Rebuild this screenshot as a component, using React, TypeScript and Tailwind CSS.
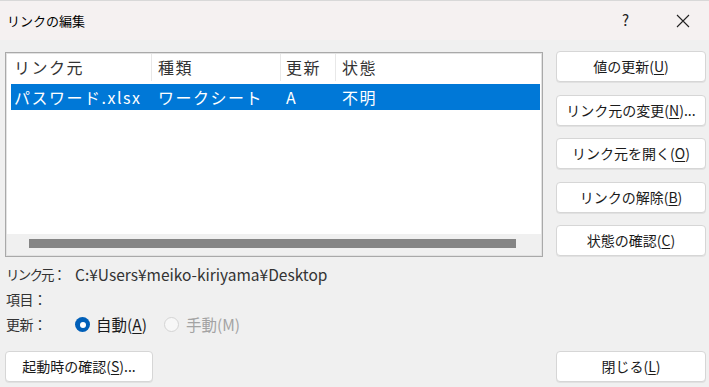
const font = { fontFamily: '"Noto Sans CJK JP", "Noto Sans", sans-serif' };

const U = ({ k }: { k: string }) => <span className="underline underline-offset-2">{k}</span>;

const btn =
  'flex items-center justify-center h-[31px] rounded-[4px] bg-white border border-[#d6d6d6] text-[14px] text-[#1a1a1a] shadow-[0_1px_0_rgba(0,0,0,0.06)]';

export default function App() {
  return (
    <div style={font} className="w-[709px] h-[387px] bg-[#f0f0f0] flex flex-col overflow-hidden border-t border-[#d8d8d8]">
      {/* title bar */}
      <div className="h-[39px] shrink-0 bg-[#f5f1f1] flex items-center pl-[7px] text-[13px] text-black">
        <span>リンクの編集</span>
        <span className="ml-auto mr-[47px] text-[15px] text-[#222]">?</span>
        <svg className="mr-[19px] w-[14px] h-[14px]" viewBox="0 0 14 14" fill="none" stroke="#222" strokeWidth={1.1}>
          <path d="M1 1L13 13M13 1L1 13" />
        </svg>
      </div>

      {/* main row */}
      <div className="flex items-start pt-[11px]">
        {/* list box */}
        <div className="ml-[5px] mt-px w-[538px] h-[205px] border border-[#a9a9a9] flex flex-col">
          <div className="flex-1 border border-[#e2e2e2] flex flex-col">
            <div className="flex-1 bg-white pl-[4px] pr-[1px] text-[16px] tracking-[1.5px]">
              <div className="grid grid-cols-[140px_129px_55px_1fr] h-[27px] text-[#333] leading-[27px]">
                <div className="pl-[3px]">リンク元</div>
                <div className="pl-[6px] border-l border-[#e8e8e8]">種類</div>
                <div className="pl-[5px] border-l border-[#e8e8e8]">更新</div>
                <div className="pl-[6px] border-l border-[#e8e8e8]">状態</div>
              </div>
              <div className="mt-[3px] grid grid-cols-[140px_129px_55px_1fr] h-[26px] bg-[#0078d7] text-white leading-[26px]">
                <div className="pl-[3px]">パスワード.xlsx</div>
                <div className="pl-[7px]">ワークシート</div>
                <div className="pl-[6px]">A</div>
                <div className="pl-[7px]">不明</div>
              </div>
            </div>
            <div className="h-[21px] shrink-0 bg-[#f0f0f0] pl-[22px] pr-[25px] pt-[5px]">
              <div className="h-[9px] bg-[#858585]" />
            </div>
          </div>
        </div>

        {/* right buttons */}
        <div className="ml-[13px] w-[150px] flex flex-col gap-[12.5px]">
          <div className={btn}>値の更新(<U k="U" />)</div>
          <div className={btn}>リンク元の変更(<U k="N" />)...</div>
          <div className={btn}>リンク元を開く(<U k="O" />)</div>
          <div className={btn}>リンクの解除(<U k="B" />)</div>
          <div className={`${btn} border-[#3b82d0]`}>状態の確認(<U k="C" />)</div>
        </div>
      </div>

      {/* info */}
      <div className="mt-[5px] pl-[6px] text-[#333] flex flex-col whitespace-nowrap">
        <div className="h-[25px] flex items-center">
          <span className="w-[69px] shrink-0 text-[13.5px] tracking-[-1.8px]">リンク元：</span>
          <span className="text-[15.5px]">C:¥Users¥meiko-kiriyama¥Desktop</span>
        </div>
        <div className="h-[25px] flex items-center text-[14px] tracking-[-0.5px]">項目：</div>
        <div className="h-[25px] flex items-center">
          <span className="w-[69px] shrink-0 text-[14px] tracking-[-0.5px]">更新：</span>
          <span className="w-[15px] h-[15px] rounded-full bg-[#005fb8] flex items-center justify-center">
            <span className="w-[6px] h-[6px] rounded-full bg-white" />
          </span>
          <span className="ml-[6px] text-[15.5px] text-[#1a1a1a]">
            自動(<U k="A" />)
          </span>
          <span className="ml-[17px] w-[15px] h-[15px] rounded-full bg-[#f7f7f7] border border-[#d4d4d4]" />
          <span className="ml-[7px] text-[15.5px] text-[#a3a3a3]">手動(M)</span>
        </div>
      </div>

      {/* bottom buttons */}
      <div className="mt-auto mb-[5px] flex justify-between pl-[5px] pr-[3px]">
        <div className={`${btn} w-[148px]`}>起動時の確認(<U k="S" />)...</div>
        <div className={`${btn} w-[150px]`}>閉じる(<U k="L" />)</div>
      </div>
    </div>
  );
}
